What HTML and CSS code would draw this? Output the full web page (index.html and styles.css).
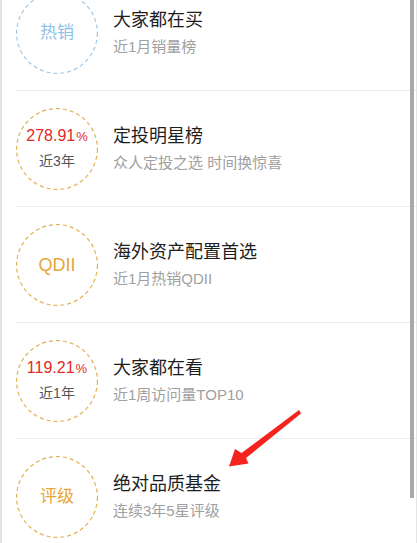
FILE: index.html
```html
<!DOCTYPE html>
<html lang="zh">
<head>
<meta charset="utf-8">
<link rel="stylesheet" href="styles.css">
</head>
<body>
<div class="page">
  <ul class="list">
    <li class="row">
      <div class="badge blue">
        <svg class="ring" width="82" height="82" viewBox="0 0 82 82"><circle cx="41" cy="41" r="40.4"/></svg>
        <div class="badge-body"><span class="badge-word">热销</span></div>
      </div>
      <div class="info"><div class="title">大家都在买</div><div class="sub">近1月销量榜</div></div>
    </li>
    <li class="row">
      <div class="badge orange">
        <svg class="ring" width="82" height="82" viewBox="0 0 82 82"><circle cx="41" cy="41" r="40.4"/></svg>
        <div class="badge-body"><div class="rate">278.91<small>%</small></div><div class="period">近3年</div></div>
      </div>
      <div class="info"><div class="title">定投明星榜</div><div class="sub">众人定投之选 时间换惊喜</div></div>
    </li>
    <li class="row">
      <div class="badge orange">
        <svg class="ring" width="82" height="82" viewBox="0 0 82 82"><circle cx="41" cy="41" r="40.4"/></svg>
        <div class="badge-body"><span class="badge-word latin">QDII</span></div>
      </div>
      <div class="info"><div class="title">海外资产配置首选</div><div class="sub">近1月热销QDII</div></div>
    </li>
    <li class="row">
      <div class="badge orange">
        <svg class="ring" width="82" height="82" viewBox="0 0 82 82"><circle cx="41" cy="41" r="40.4"/></svg>
        <div class="badge-body"><div class="rate">119.21<small>%</small></div><div class="period">近1年</div></div>
      </div>
      <div class="info"><div class="title">大家都在看</div><div class="sub">近1周访问量TOP10</div></div>
    </li>
    <li class="row">
      <div class="badge orange">
        <svg class="ring" width="82" height="82" viewBox="0 0 82 82"><circle cx="41" cy="41" r="40.4"/></svg>
        <div class="badge-body"><span class="badge-word">评级</span></div>
      </div>
      <div class="info"><div class="title">绝对品质基金</div><div class="sub">连续3年5星评级</div></div>
    </li>
  </ul>
  <div class="scrollbar"></div>
  <svg class="arrow" width="417" height="543" viewBox="0 0 417 543">
    <polygon points="299,410 301,413.5 246,458 248.5,463.5 229,466.5 235,449 241.5,453" fill="#f5231e"/>
  </svg>
</div>
</body>
</html>
```
FILE: styles.css
```css
html, body {
  margin: 0;
  padding: 0;
  background: #fff;
}
body {
  font-family: "Liberation Sans", "Noto Sans CJK SC", sans-serif;
  width: 417px;
  height: 543px;
  overflow: hidden;
}
.page {
  position: relative;
  width: 417px;
  height: 543px;
  box-sizing: border-box;
  border-left: 2px solid #e2e2e2;
  border-right: 1px solid #e4e4e4;
  overflow: hidden;
}
.list {
  list-style: none;
  margin: -25px 0 0 0;
  padding: 0 0 0 14px;
}
.row {
  display: flex;
  align-items: center;
  gap: 15px;
  height: 115px;
  border-bottom: 1px solid #ebebeb;
}
.badge {
  width: 82px;
  height: 82px;
  display: grid;
  flex: none;
}
.badge > * {
  grid-area: 1 / 1;
}
.ring circle {
  fill: none;
  stroke: #e2b257;
  stroke-width: 1.2;
  stroke-dasharray: 4 3;
}
.badge.blue .ring circle {
  stroke: #a3c9e6;
}
.badge-body {
  display: flex;
  flex-direction: column;
  align-items: center;
  justify-content: center;
  gap: 4px;
}
.badge-word {
  font-size: 17px;
  line-height: 22px;
  color: #e8a63a;
}
.badge.blue .badge-word {
  color: #8fc1e8;
}
.badge-word.latin {
  font-size: 18px;
}
.rate {
  font-size: 16px;
  line-height: 20px;
  color: #e12a24;
}
.rate small {
  font-size: 13px;
  margin-left: 1px;
}
.period {
  font-size: 14px;
  line-height: 20px;
  color: #555;
}
.info {
  display: flex;
  flex-direction: column;
  gap: 5px;
}
.title {
  font-size: 18px;
  line-height: 24px;
  color: #1e1e1e;
}
.sub {
  font-size: 15px;
  line-height: 20px;
  color: #a0a0a0;
}
.scrollbar {
  position: absolute;
  left: 408px;
  top: 0;
  width: 4px;
  height: 498px;
  background: #a9a9a9;
}
.arrow {
  position: absolute;
  left: -2px;
  top: 0;
}
```
